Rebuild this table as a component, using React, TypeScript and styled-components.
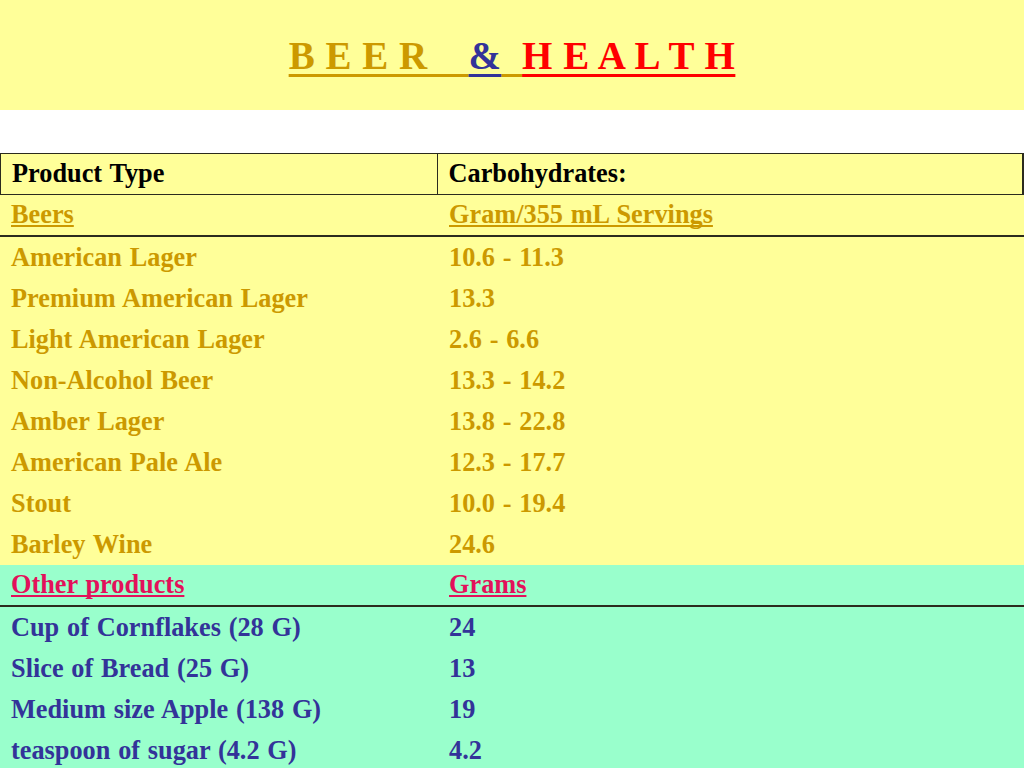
import React from "react";
import styled, { createGlobalStyle } from "styled-components";

const Global = createGlobalStyle`
  html, body { margin: 0; padding: 0; background: #ffffff; }
  body { width: 1024px; height: 768px; overflow: hidden; }
`;

const Page = styled.div`
  width: 1024px;
  height: 768px;
  display: flex;
  flex-direction: column;
  background: #ffffff;
  font-family: "Liberation Serif", "Times New Roman", serif;
`;

const TitleBand = styled.header`
  height: 110px;
  flex: none;
  background: #ffff99;
  display: flex;
  justify-content: center;
  padding-top: 33px;
  box-sizing: border-box;
`;

const Title = styled.h1`
  margin: 0;
  font-family: "Liberation Serif", "Times New Roman", serif;
  font-weight: bold;
  font-size: 39px;
  line-height: 46px;
  letter-spacing: 0.5px;
  white-space: pre;
`;

const TitlePart = styled.span<{ $color: string }>`
  color: ${(p) => p.$color};
  text-decoration: underline;
  text-decoration-color: ${(p) => p.$color};
  text-decoration-thickness: 2.5px;
  text-decoration-skip-ink: none;
  text-underline-offset: 5px;
`;

const Spacer = styled.div`
  height: 43px;
  flex: none;
`;

const Table = styled.div`
  display: flex;
  flex-direction: column;
`;

const Row = styled.div<{ $bg: string; $border?: boolean; $header?: boolean }>`
  display: grid;
  grid-template-columns: 438px 1fr;
  height: ${(p) => (p.$header || p.$border ? 42 : 41)}px;
  flex: none;
  box-sizing: border-box;
  background: ${(p) => p.$bg};
  border-bottom: ${(p) => (p.$border ? "2px solid #2b2b1e" : "none")};
  ${(p) =>
    p.$header
      ? "border: 1.5px solid #2b2b1e; border-right-width: 2px; grid-template-columns: 436.5px 1fr;"
      : ""}
`;

const Cell = styled.div<{ $color: string; $divider?: boolean; $link?: boolean }>`
  display: flex;
  align-items: center;
  padding-left: 11px;
  font-size: 26.3px;
  word-spacing: 1.2px;
  font-weight: bold;
  color: ${(p) => p.$color};
  border-right: ${(p) => (p.$divider ? "1.5px solid #2b2b1e" : "none")};
  text-decoration: ${(p) => (p.$link ? "underline" : "none")};
  text-underline-offset: 2px;
  text-decoration-thickness: 1.5px;
  text-decoration-skip-ink: none;
  white-space: nowrap;
`;

const YELLOW = "#ffff99";
const GREEN = "#99ffcc";
const GOLD = "#cc9900";
const NAVY = "#333399";
const PINK = "#e3105a";

const beers: [string, string][] = [
  ["American Lager", "10.6 - 11.3"],
  ["Premium American Lager", "13.3"],
  ["Light American Lager", "2.6 - 6.6"],
  ["Non-Alcohol Beer", "13.3 - 14.2"],
  ["Amber Lager", "13.8 - 22.8"],
  ["American Pale Ale", "12.3 - 17.7"],
  ["Stout", "10.0 - 19.4"],
  ["Barley Wine", "24.6"],
];

const others: [string, string][] = [
  ["Cup of Cornflakes (28 G)", "24"],
  ["Slice of Bread (25 G)", "13"],
  ["Medium size Apple (138 G)", "19"],
  ["teaspoon of sugar (4.2 G)", "4.2"],
];

export default function App() {
  return (
    <Page>
      <Global />
      <TitleBand>
        <Title>
          <TitlePart $color={GOLD}>{"B E E R    "}</TitlePart>
          <TitlePart $color={NAVY}>&amp;</TitlePart>
          <TitlePart $color={GOLD}>{"  "}</TitlePart>
          <TitlePart $color="#ff0000">{"H E A L T H"}</TitlePart>
        </Title>
      </TitleBand>
      <Spacer />
      <Table>
        <Row $bg={YELLOW} $header>
          <Cell $color="#000000" $divider>Product Type</Cell>
          <Cell $color="#000000">Carbohydrates:</Cell>
        </Row>
        <Row $bg={YELLOW} $border>
          <Cell $color={GOLD} $link>Beers</Cell>
          <Cell $color={GOLD} $link>Gram/355 mL Servings</Cell>
        </Row>
        {beers.map(([a, b]) => (
          <Row key={a} $bg={YELLOW}>
            <Cell $color={GOLD}>{a}</Cell>
            <Cell $color={GOLD}>{b}</Cell>
          </Row>
        ))}
        <Row $bg={GREEN} $border>
          <Cell $color={PINK} $link>Other products</Cell>
          <Cell $color={PINK} $link>Grams</Cell>
        </Row>
        {others.map(([a, b]) => (
          <Row key={a} $bg={GREEN}>
            <Cell $color={NAVY}>{a}</Cell>
            <Cell $color={NAVY}>{b}</Cell>
          </Row>
        ))}
      </Table>
    </Page>
  );
}
